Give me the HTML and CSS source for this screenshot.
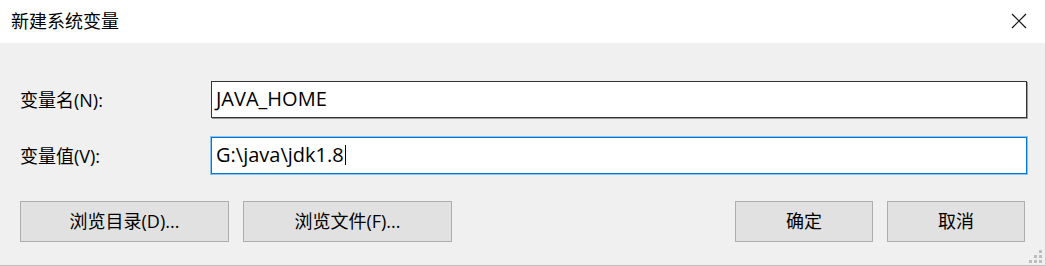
FILE: index.html
```html
<!DOCTYPE html>
<html lang="zh-CN">
<head>
  <meta charset="UTF-8" />
  <title>新建系统变量</title>
  <link rel="stylesheet" href="styles.css">
</head>
<body>
  <div class="dialog">

    <!-- barra de título -->
    <div class="titlebar">
      <span class="title">新建系统变量</span>
      <span class="close">
        <svg width="16" height="16" viewBox="0 0 16 16"><path d="M1 1 L15 15 M15 1 L1 15" stroke="#111" stroke-width="1.2" fill="none"/></svg>
      </span>
    </div>

    <!-- corpo -->
    <div class="body">
      <div class="form">
        <label class="label">变量名(N):</label>
        <div class="field">JAVA_HOME</div>
        <label class="label">变量值(V):</label>
        <div class="field focus">G:\java\jdk1.8<span class="caret"></span></div>
      </div>

      <div class="actions">
        <div class="group">
          <button class="btn wide">浏览目录(D)...</button>
          <button class="btn wide">浏览文件(F)...</button>
        </div>
        <div class="group">
          <button class="btn">确定</button>
          <button class="btn">取消</button>
        </div>
      </div>

      <div class="grip">
        <i></i>
        <i></i><i></i>
        <i></i><i></i><i></i>
      </div>
    </div>
  </div>
</body>
</html>
```

FILE: styles.css
```css
* { margin: 0; padding: 0; box-sizing: border-box; }
html, body { width: 100%; height: 100%; background: #f0f0f0; }
body { font-family: "Open Sans", "Noto Sans CJK SC", sans-serif; font-size: 18px; color: #000; overflow: hidden; }

.dialog { width: 1046px; height: 266px; display: flex; flex-direction: column; border-right: 1px solid #cfcfcf; border-bottom: 1px solid #bdbdbd; }

/* Barra de título */
.titlebar { height: 43px; background: #fff; display: flex; align-items: center; justify-content: space-between; padding: 0 18px 2px 11px; flex-shrink: 0; }
.title { font-size: 18px; line-height: 1; }
.close { display: flex; width: 16px; height: 16px; }

/* Corpo */
.body { flex: 1; position: relative; padding: 38px 0 0 20px; }
.form { display: grid; grid-template-columns: 191px 816px; row-gap: 19px; align-items: center; }
.label { line-height: 1; }
.field { height: 37px; background: #fff; border: 1px solid #333; box-shadow: 1px 1px 0 #9a9a9a; display: flex; align-items: center; padding: 0 4px 1px; font-size: 20px; line-height: 1; }
.field.focus { border-color: #0078d7; box-shadow: 0 0 0 1px #8cc3ee; }
.caret { display: inline-block; width: 1px; height: 20px; background: #000; margin-left: 1px; }

/* Botões */
.actions { display: flex; justify-content: space-between; margin-top: 27px; padding-right: 20px; }
.group { display: flex; gap: 14px; }
.btn { width: 138px; height: 41px; background: #e1e1e1; border: 1px solid #adadad; font: inherit; color: #000; line-height: 1; padding-bottom: 2px; }
.btn.wide { width: 209px; }

/* Alça de redimensionar */
.grip { position: absolute; right: 3px; bottom: 2px; width: 14px; height: 14px; display: grid; grid-template-columns: repeat(3, 3px); grid-template-rows: repeat(3, 3px); gap: 2px; justify-content: end; align-content: end; }
.grip i { background: #bdbdbd; }
.grip i:nth-child(1) { grid-column: 3; grid-row: 1; }
.grip i:nth-child(2) { grid-column: 2; grid-row: 2; }
.grip i:nth-child(3) { grid-column: 3; grid-row: 2; }
.grip i:nth-child(4) { grid-column: 1; grid-row: 3; }
.grip i:nth-child(5) { grid-column: 2; grid-row: 3; }
.grip i:nth-child(6) { grid-column: 3; grid-row: 3; }
```
